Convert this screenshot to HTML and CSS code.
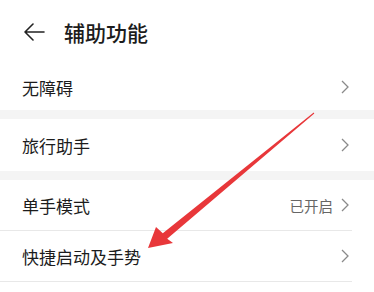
FILE: index.html
```html
<!DOCTYPE html>
<html lang="zh">
<head>
<meta charset="utf-8">
<link rel="stylesheet" href="styles.css">
</head>
<body>
<div class="page">
  <header class="header">
    <svg class="back" width="22" height="18" viewBox="0 0 22 18"><path d="M21 9H2M10 1L2 9l8 8" fill="none" stroke="#222" stroke-width="1.6" stroke-linecap="round" stroke-linejoin="round"/></svg>
    <h1 class="title">辅助功能</h1>
  </header>
  <section class="group">
    <div class="row first"><span class="label">无障碍</span><svg class="chev" width="8" height="14" viewBox="0 0 8 14"><path d="M1 1l6 6-6 6" fill="none" stroke="#8a8a8a" stroke-width="1.3"/></svg></div>
  </section>
  <div class="band"></div>
  <section class="group">
    <div class="row tall"><span class="label">旅行助手</span><svg class="chev" width="8" height="14" viewBox="0 0 8 14"><path d="M1 1l6 6-6 6" fill="none" stroke="#8a8a8a" stroke-width="1.3"/></svg></div>
  </section>
  <div class="band"></div>
  <section class="group">
    <div class="row divided"><span class="label">单手模式</span><span class="value">已开启</span><svg class="chev" width="8" height="14" viewBox="0 0 8 14"><path d="M1 1l6 6-6 6" fill="none" stroke="#8a8a8a" stroke-width="1.3"/></svg></div>
    <div class="row divided"><span class="label">快捷启动及手势</span><svg class="chev" width="8" height="14" viewBox="0 0 8 14"><path d="M1 1l6 6-6 6" fill="none" stroke="#8a8a8a" stroke-width="1.3"/></svg></div>
  </section>
  <svg class="arrow" width="374" height="292" viewBox="0 0 374 292"><polygon points="148,248 156,227 162.8,233.3 313.7,112.6 314.3,113.4 167.2,238.7 173,243" fill="#e8373a"/></svg>
</div>
</body>
</html>
```
FILE: styles.css
```css
html, body {
  margin: 0;
  padding: 0;
  background: #fff;
}
.page {
  position: relative;
  width: 374px;
  height: 292px;
  overflow: hidden;
  font-family: "Noto Sans CJK SC", "Noto Sans", sans-serif;
  color: #1c1c1c;
}
.header {
  height: 64px;
  display: flex;
  align-items: center;
  padding-left: 23px;
}
.back {
  display: block;
}
.title {
  margin: 0 0 0 19px;
  font-size: 21px;
  font-weight: 500;
  line-height: 1;
}
.row {
  display: flex;
  align-items: center;
  height: 46px;
  padding: 0 25px 0 22px;
  font-size: 17px;
}
.row.tall {
  height: 52px;
}
.row.divided {
  height: 50px;
  margin-right: 22px;
  padding-right: 3px;
  border-bottom: 1px solid #e8e8e8;
}
.label {
  flex: 1;
}
.value {
  font-size: 14.5px;
  color: #666;
  margin-right: 8px;
}
.chev {
  display: block;
}
.band {
  height: 9px;
  background: #f4f4f4;
}
.arrow {
  position: absolute;
  left: 0;
  top: 0;
  pointer-events: none;
}
```
